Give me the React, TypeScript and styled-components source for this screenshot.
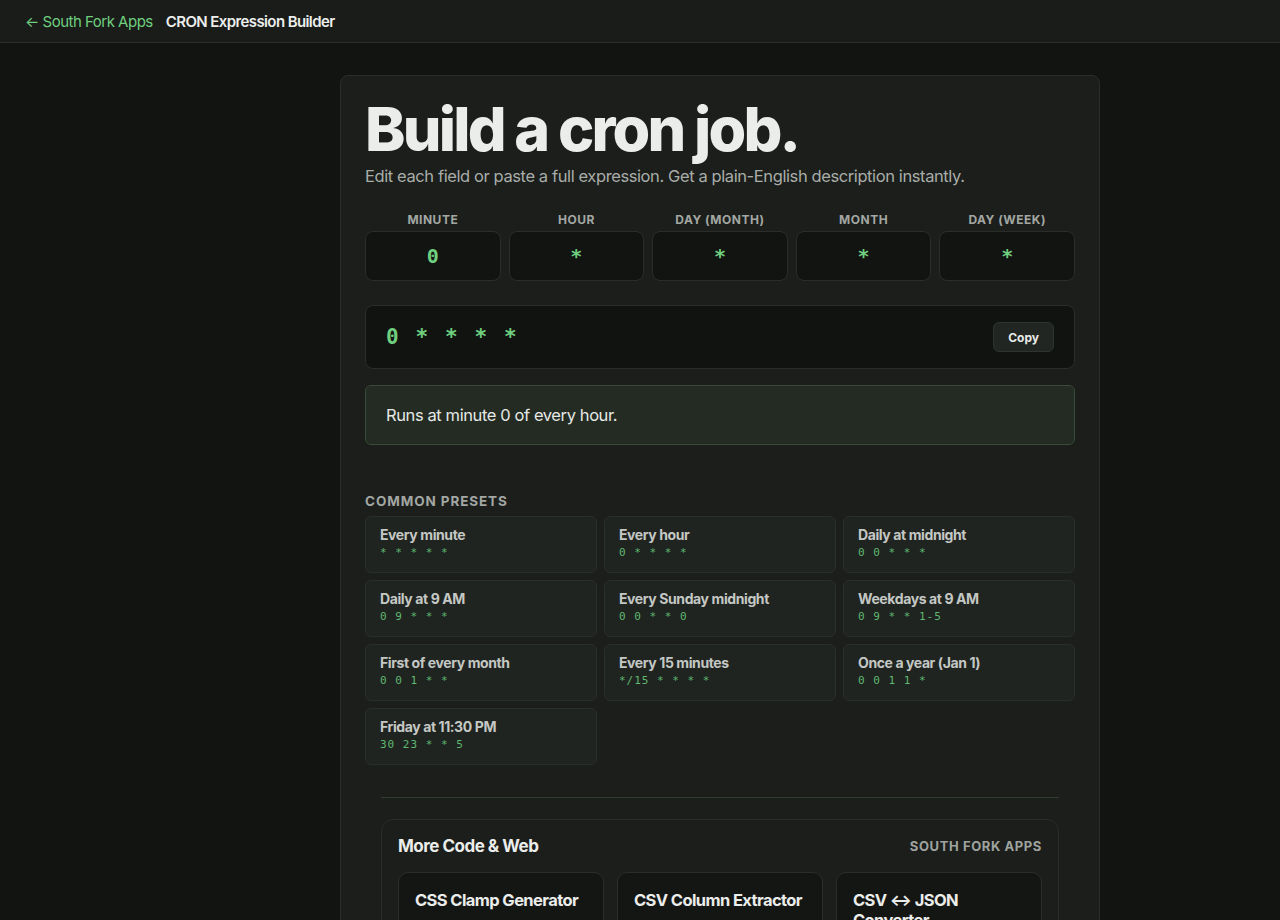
import React, { useState } from "react";
import styled, { createGlobalStyle } from "styled-components";

const GlobalStyle = createGlobalStyle`
  body {
    margin: 0;
    background: #121412;
    font-family: Inter, "Noto Sans", sans-serif;
    color: #e8eae8;
  }
  * { box-sizing: border-box; }
`;

const TopBar = styled.header`
  height: 43px;
  display: flex;
  align-items: center;
  gap: 13px;
  padding: 1px 25px 0;
  background: #1a1c1a;
  border-bottom: 1px solid #2a2e2a;
  font-size: 15px;
`;

const BackLink = styled.a`
  color: #6fcf7f;
  text-decoration: none;
  letter-spacing: -0.5px;
`;

const AppName = styled.span`
  font-weight: 600;
  color: #eceeec;
  letter-spacing: -0.6px;
`;

const Main = styled.main`
  padding: 32px 0 0 340px;
`;

const Card = styled.section`
  width: 760px;
  background: #1b1e1b;
  border: 1px solid #2a2e2a;
  border-radius: 8px;
  padding: 20px 24px 0;
`;

const Title = styled.h1`
  margin: 0;
  font-size: 61px;
  font-weight: 800;
  letter-spacing: -2.8px;
  line-height: 66px;
  color: #ebedeb;
`;

const Subtitle = styled.p`
  margin: 4px 0 0;
  font-size: 16.5px;
  color: #a9ada9;
  letter-spacing: -0.4px;
`;

const FieldRow = styled.div`
  display: grid;
  grid-template-columns: repeat(5, minmax(0, 1fr));
  gap: 8px;
  margin-top: 26px;
`;

const Field = styled.label`
  display: flex;
  flex-direction: column;
  align-items: stretch;
  gap: 4px;
  min-width: 0;
`;

const FieldLabel = styled.span`
  text-align: center;
  font-size: 12px;
  font-weight: 700;
  letter-spacing: 0.5px;
  color: #a3a7a3;
`;

const FieldInput = styled.input`
  width: 100%;
  min-width: 0;
  height: 50px;
  background: #121412;
  border: 1px solid #2a2e2a;
  border-radius: 8px;
  text-align: center;
  color: #6fcf7f;
  font-family: "DejaVu Sans Mono", monospace;
  font-size: 20px;
  font-weight: 700;
  outline: none;
`;

const ExprBox = styled.div`
  margin-top: 24px;
  height: 64px;
  display: flex;
  align-items: center;
  justify-content: space-between;
  padding: 0 20px;
  background: #111311;
  border: 1px solid #2a2e2a;
  border-radius: 8px;
`;

const ExprText = styled.code`
  font-family: "DejaVu Sans Mono", monospace;
  font-size: 21px;
  font-weight: 700;
  color: #6fcf7f;
  letter-spacing: 2.1px;
  white-space: pre;
`;

const CopyButton = styled.button`
  height: 30px;
  padding: 0 14px;
  background: #222622;
  border: 1px solid #2f332f;
  border-radius: 6px;
  color: #e8eae8;
  font-family: Inter, sans-serif;
  font-size: 12px;
  font-weight: 700;
`;

const Description = styled.div`
  margin-top: 16px;
  height: 60px;
  display: flex;
  align-items: center;
  padding: 0 20px;
  background: #232b23;
  border: 1px solid #384a38;
  border-radius: 6px;
  font-size: 16.5px;
  color: #e6e8e6;
  letter-spacing: -0.4px;
`;

const SectionLabel = styled.h2`
  margin: 48px 0 7px;
  font-size: 13.5px;
  font-weight: 700;
  letter-spacing: 0.9px;
  color: #a3a7a3;
`;

const PresetGrid = styled.div`
  display: grid;
  grid-template-columns: repeat(3, minmax(0, 1fr));
  gap: 7px;
`;

const Preset = styled.button`
  height: 57px;
  display: flex;
  flex-direction: column;
  align-items: flex-start;
  justify-content: center;
  gap: 3px;
  padding: 0 14px 4px;
  background: #202420;
  border: 1px solid #2a2f2a;
  border-radius: 6px;
  text-align: left;
  cursor: pointer;
`;

const PresetName = styled.span`
  font-family: Inter, sans-serif;
  font-size: 14px;
  font-weight: 700;
  color: #c4c8c4;
  letter-spacing: -0.4px;
`;

const PresetCode = styled.span`
  font-family: "DejaVu Sans Mono", monospace;
  font-size: 11px;
  color: #5fb86f;
  letter-spacing: 1px;
  white-space: pre;
`;

const Divider = styled.hr`
  margin: 32px 16px 21px;
  border: 0;
  border-top: 1px solid #2e3e2e;
`;

const More = styled.div`
  margin: 0 16px;
  padding: 16px 16px 40px;
  background: #1b1e1b;
  border: 1px solid #2a2e2a;
  border-radius: 12px;
`;

const MoreHead = styled.div`
  display: flex;
  justify-content: space-between;
  align-items: center;
  margin-bottom: 16px;
`;

const MoreTitle = styled.h3`
  margin: 0;
  font-size: 17px;
  font-weight: 700;
  color: #ebedeb;
  letter-spacing: -0.5px;
`;

const MoreBrand = styled.span`
  font-size: 13px;
  font-weight: 700;
  letter-spacing: 0.6px;
  color: #9fa39f;
`;

const AppGrid = styled.div`
  display: grid;
  grid-template-columns: repeat(3, minmax(0, 1fr));
  gap: 13px;
`;

const AppCard = styled.a`
  display: block;
  min-height: 90px;
  padding: 17px 16px;
  background: #141614;
  border: 1px solid #2a2e2a;
  border-radius: 10px;
  font-size: 16.5px;
  font-weight: 700;
  line-height: 20px;
  color: #ebedeb;
  text-decoration: none;
  letter-spacing: -0.6px;
`;

const fields = ["MINUTE", "HOUR", "DAY (MONTH)", "MONTH", "DAY (WEEK)"];

const presets = [
  ["Every minute", "* * * * *"],
  ["Every hour", "0 * * * *"],
  ["Daily at midnight", "0 0 * * *"],
  ["Daily at 9 AM", "0 9 * * *"],
  ["Every Sunday midnight", "0 0 * * 0"],
  ["Weekdays at 9 AM", "0 9 * * 1-5"],
  ["First of every month", "0 0 1 * *"],
  ["Every 15 minutes", "*/15 * * * *"],
  ["Once a year (Jan 1)", "0 0 1 1 *"],
  ["Friday at 11:30 PM", "30 23 * * 5"],
];

const apps = ["CSS Clamp Generator", "CSV Column Extractor", "CSV \u2194 JSON Converter"];

export default function App() {
  const [parts, setParts] = useState<string[]>(["0", "*", "*", "*", "*"]);

  return (
    <>
      <GlobalStyle />
      <TopBar>
        <BackLink href="#">← South Fork Apps</BackLink>
        <AppName>CRON Expression Builder</AppName>
      </TopBar>
      <Main>
        <Card>
          <Title>Build a cron job.</Title>
          <Subtitle>Edit each field or paste a full expression. Get a plain-English description instantly.</Subtitle>
          <FieldRow>
            {fields.map((f, i) => (
              <Field key={f}>
                <FieldLabel>{f}</FieldLabel>
                <FieldInput
                  value={parts[i]}
                  onChange={(e) => {
                    const next = [...parts];
                    next[i] = e.target.value;
                    setParts(next);
                  }}
                />
              </Field>
            ))}
          </FieldRow>
          <ExprBox>
            <ExprText>{parts.join(" ")}</ExprText>
            <CopyButton>Copy</CopyButton>
          </ExprBox>
          <Description>Runs at minute 0 of every hour.</Description>
          <SectionLabel>COMMON PRESETS</SectionLabel>
          <PresetGrid>
            {presets.map(([name, code]) => (
              <Preset key={name} onClick={() => setParts(code.split(" "))}>
                <PresetName>{name}</PresetName>
                <PresetCode>{code}</PresetCode>
              </Preset>
            ))}
          </PresetGrid>
          <Divider />
          <More>
            <MoreHead>
              <MoreTitle>More Code &amp; Web</MoreTitle>
              <MoreBrand>SOUTH FORK APPS</MoreBrand>
            </MoreHead>
            <AppGrid>
              {apps.map((a) => (
                <AppCard key={a} href="#">{a}</AppCard>
              ))}
            </AppGrid>
          </More>
        </Card>
      </Main>
    </>
  );
}
